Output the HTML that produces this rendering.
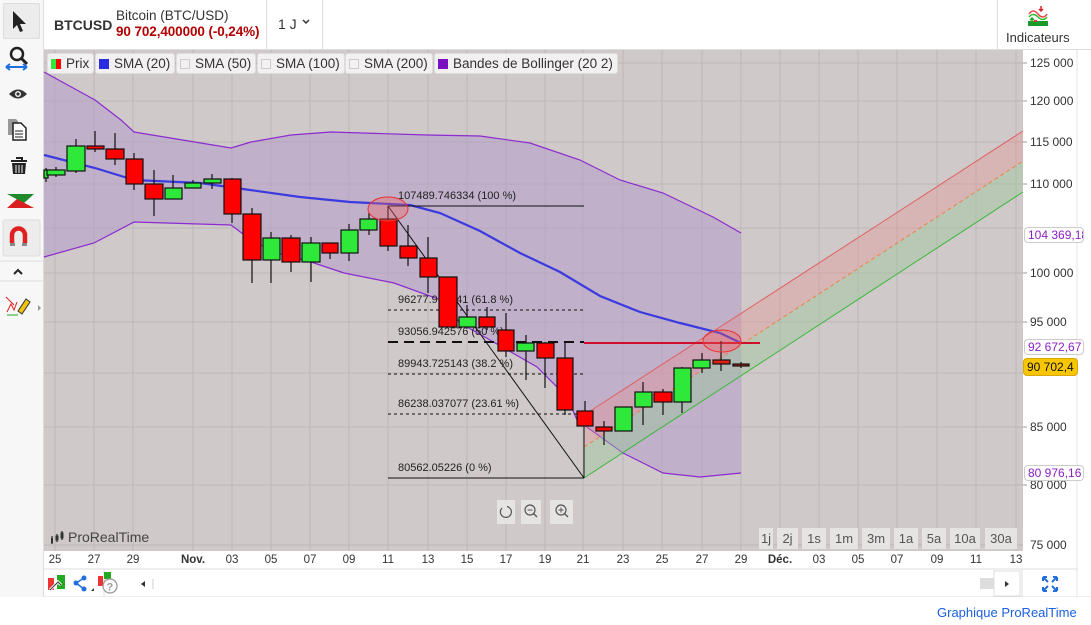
<!DOCTYPE html>
<html><head><meta charset="utf-8">
<style>
*{margin:0;padding:0;box-sizing:border-box}
body{width:1091px;height:625px;background:#fff;font-family:"Liberation Sans",sans-serif;position:relative;overflow:hidden;color:#333}
.abs{position:absolute}
.lt{left:0;top:0;width:44px;height:597px;background:#f7f7f7;border-right:1px solid #ddd}
.ib{position:absolute;left:3px;width:37px;height:36px}
.leg{position:absolute;top:53px;height:21px;background:#f2f0f0;border:1px solid #ddd;border-radius:3px;font-size:13.5px;line-height:19px;padding:0 4px 0 3px;color:#333;white-space:nowrap}
.sq{display:inline-block;width:10px;height:10px;vertical-align:-1px;margin-right:5px;border:1px solid #ccc}
.pa{position:absolute;left:1030px;font-size:12px;color:#333}
.dt{position:absolute;top:554px;font-size:11.5px;color:#333;transform:translateX(-50%)}
.pb{position:absolute;top:528px;height:21px;background:#e6e3e3;font-size:13px;color:#555;line-height:21px;text-align:center}
.tag{position:absolute;left:1024px;height:16px;font-size:12px;line-height:14px;padding:0 3px;border:1px solid #ccc;border-radius:4px;background:#fff;color:#8b1fc4;width:60px;overflow:hidden;white-space:nowrap}
</style></head><body>
<div class="abs lt">
 <div class="ib" style="top:3px;background:#ececec;border:1px solid #ddd;border-radius:2px"></div>
 <svg class="abs" style="left:0;top:0" width="44" height="320">
  <path d="M13 11 L13 29 L17 25 L20 32 L23 31 L20 24 L26 24 Z" fill="#222"/>
  <circle cx="17" cy="54" r="6" fill="none" stroke="#222" stroke-width="2.5"/>
  <line x1="21" y1="58" x2="27" y2="64" stroke="#222" stroke-width="3"/>
  <path d="M6 67 H27 M6 67 l4 -3 M6 67 l4 3 M27 67 l-4 -3 M27 67 l-4 3" stroke="#1f6fe0" stroke-width="2" fill="none"/>
  <path d="M9 94 Q18 85 27 94 Q18 103 9 94Z" fill="#333"/><circle cx="18" cy="94" r="3" fill="#f7f7f7"/><circle cx="18" cy="94" r="1.6" fill="#333"/>
  <path d="M8 119 h8 l2 2 v14 h-10z" fill="#999"/><path d="M13 123 h8 l5 5 v12 h-13z" fill="#fff" stroke="#222" stroke-width="1.5"/><path d="M15 131h8M15 134h8M15 137h8" stroke="#222"/>
  <path d="M11 161 h16 M16 158 h6 v3" stroke="#222" stroke-width="2" fill="none"/><path d="M12 163 h14 l-1 11 h-12z" fill="#222"/><path d="M16 165v8M19 165v8M22 165v8" stroke="#f7f7f7"/>
  <path d="M7 194 L34 194 L24 203 Z" fill="#1e8a2b"/><path d="M7 208 L34 208 L17 199 Z" fill="#d92020"/>
  <rect x="3" y="220" width="37" height="36" rx="2" fill="#ececec" stroke="#ddd"/>
  <path d="M12 243 V235 A6.5 6.5 0 0 1 25 235 V243" fill="none" stroke="#e02020" stroke-width="4.5"/>
  <rect x="10" y="243" width="5" height="3" fill="#888"/><rect x="22" y="243" width="5" height="3" fill="#888"/>
  <line x1="0" y1="261" x2="44" y2="261" stroke="#ddd"/><line x1="0" y1="281" x2="44" y2="281" stroke="#ddd"/>
  <path d="M14 274 l4 -4 l4 4" stroke="#222" stroke-width="2" fill="none"/>
  <path d="M6 297 l8 8 M7 312 l4 -8 l3 6 l3 -8" stroke="#d22" fill="none"/><path d="M18 311 l8 -12 l4 3 l-8 12 z" fill="#f1c40f" stroke="#333"/><line x1="7" y1="315" x2="18" y2="315" stroke="#2a2"/>
  <path d="M38 305 l3 3 l-3 3z" fill="#999"/>
 </svg>
</div>
<div class="abs" style="left:44px;top:0;width:1047px;height:50px;background:#fff;border-bottom:1px solid #ddd"></div>
<div class="abs" style="left:54px;top:17px;font-size:14px;font-weight:bold;color:#333">BTCUSD</div>
<div class="abs" style="left:116px;top:8px;font-size:13.5px;color:#333">Bitcoin (BTC/USD)</div>
<div class="abs" style="left:116px;top:24px;font-size:13.5px;color:#b30000;font-weight:bold;letter-spacing:-0.1px">90 702,400000 (-0,24%)</div>
<div class="abs" style="top:0;width:1px;height:50px;background:#ddd;left:266px"></div>
<div class="abs" style="left:278px;top:16px;font-size:14px;color:#333">1 J</div>
<svg class="abs" style="left:302px;top:19px" width="8" height="6"><path d="M1 1 l3 3 l3 -3" stroke="#333" stroke-width="1.5" fill="none"/></svg>
<div class="abs" style="left:322px;top:0;width:1px;height:50px;background:#ddd"></div>
<div class="abs" style="left:997px;top:0;width:1px;height:50px;background:#ddd"></div>
<svg class="abs" style="left:1027px;top:5px" width="22" height="22">
 <path d="M2 9 q4 -6 9 0 t9 0" stroke="#e44" fill="none" stroke-width="1.5"/><path d="M2 12 q4 -5 9 0 t9 0" stroke="#3b3" fill="none" stroke-width="1.5"/>
 <path d="M14 1 v5 M12 4 l2 2 l2 -2" stroke="#d22" fill="none" stroke-width="1.5"/>
 <path d="M5 18 v-5 M3 15 l2 -2 l2 2" stroke="#2a2" fill="none" stroke-width="1.5"/>
 <rect x="1" y="16" width="20" height="5" fill="#1a9a2a"/><rect x="7" y="15" width="3" height="2" fill="#e33"/>
</svg>
<div class="abs" style="left:1006px;top:30px;font-size:13px;color:#333">Indicateurs</div>

<svg class="abs" style="left:0;top:0" width="1091" height="597">
 <rect x="44" y="50" width="979" height="501" fill="#cfc9c9"/>
 <g stroke="#bdb6b6" stroke-width="1">
  <line x1="44" y1="63" x2="1023" y2="63"/><line x1="44" y1="101" x2="1023" y2="101"/><line x1="44" y1="142" x2="1023" y2="142"/><line x1="44" y1="184" x2="1023" y2="184"/><line x1="44" y1="228" x2="1023" y2="228"/><line x1="44" y1="273" x2="1023" y2="273"/><line x1="44" y1="322" x2="1023" y2="322"/><line x1="44" y1="373" x2="1023" y2="373"/><line x1="44" y1="427" x2="1023" y2="427"/><line x1="44" y1="485" x2="1023" y2="485"/><line x1="44" y1="545" x2="1023" y2="545"/>
  <line x1="55" y1="50" x2="55" y2="551"/><line x1="94" y1="50" x2="94" y2="551"/><line x1="133" y1="50" x2="133" y2="551"/><line x1="193" y1="50" x2="193" y2="551"/><line x1="232" y1="50" x2="232" y2="551"/><line x1="271" y1="50" x2="271" y2="551"/><line x1="310" y1="50" x2="310" y2="551"/><line x1="349" y1="50" x2="349" y2="551"/><line x1="388" y1="50" x2="388" y2="551"/><line x1="428" y1="50" x2="428" y2="551"/><line x1="467" y1="50" x2="467" y2="551"/><line x1="506" y1="50" x2="506" y2="551"/><line x1="545" y1="50" x2="545" y2="551"/><line x1="583" y1="50" x2="583" y2="551"/><line x1="623" y1="50" x2="623" y2="551"/><line x1="662" y1="50" x2="662" y2="551"/><line x1="702" y1="50" x2="702" y2="551"/><line x1="741" y1="50" x2="741" y2="551"/><line x1="780" y1="50" x2="780" y2="551"/><line x1="819" y1="50" x2="819" y2="551"/><line x1="858" y1="50" x2="858" y2="551"/><line x1="897" y1="50" x2="897" y2="551"/><line x1="937" y1="50" x2="937" y2="551"/><line x1="976" y1="50" x2="976" y2="551"/><line x1="1016" y1="50" x2="1016" y2="551"/>
 </g>
 <path d="M44 72 L95 100 L121 120 L134 132 L231 148 L251 142 L291 135 L331 132 L427 135 L480 136 L530 143 L580 160 L620 180 L663 193 L713 217 L741 233 L741 473 L700 477 L663 473 L623 453 L577 420 L567 397 L537 367 L490 340 L460 323 L441 300 L394 283 L344 273 L311 262 L277 253 L251 240 L231 225 L134 222 L94 243 L44 257 Z" fill="#b59bc9" fill-opacity="0.55"/>
 <path d="M44 72 L95 100 L121 120 L134 132 L231 148 L251 142 L291 135 L331 132 L427 135 L480 136 L530 143 L580 160 L620 180 L663 193 L713 217 L741 233" fill="none" stroke="#8b2bd0" stroke-width="1.2"/>
 <path d="M44 257 L94 243 L134 222 L231 225 L251 240 L277 253 L311 262 L344 273 L394 283 L441 300 L460 323 L490 340 L537 367 L567 397 L577 420 L623 453 L663 473 L700 477 L741 473" fill="none" stroke="#8b2bd0" stroke-width="1.2"/>
 <path d="M584 415 L1023 131 L1023 161 L584 447Z" fill="#e89090" fill-opacity="0.35"/>
 <path d="M584 447 L1023 161 L1023 192 L584 478Z" fill="#9cc89c" fill-opacity="0.45"/>
 <line x1="584" y1="415" x2="1023" y2="131" stroke="#e06060" stroke-width="1"/>
 <line x1="584" y1="447" x2="1023" y2="161" stroke="#f08040" stroke-width="1" stroke-dasharray="4,3"/>
 <line x1="584" y1="478" x2="1023" y2="192" stroke="#3cb83c" stroke-width="1"/>
 <path d="M44 155 L95 168 L134 180 L200 183 L250 190 L300 197 L350 202 L410 205 L440 213 L480 231 L520 253 L560 272 L600 296 L640 312 L680 323 L720 333 L741 343" fill="none" stroke="#3a3ae0" stroke-width="2.2"/>
 <g stroke="#111" stroke-width="1">
  <line x1="388" y1="206" x2="584" y2="206"/>
  <line x1="388" y1="310" x2="584" y2="310" stroke-dasharray="3,3"/>
  <line x1="388" y1="342" x2="584" y2="342" stroke-width="2" stroke-dasharray="10,6"/>
  <line x1="388" y1="374" x2="584" y2="374" stroke-dasharray="3,3"/>
  <line x1="388" y1="414" x2="584" y2="414" stroke-dasharray="3,3"/>
  <line x1="388" y1="478" x2="584" y2="478"/>
  <line x1="388" y1="206" x2="584" y2="478"/>
  <line x1="584" y1="414" x2="584" y2="478"/>
 </g>
 <g font-size="11" fill="#222" font-family="Liberation Sans">
  <text x="398" y="199">107489.746334 (100 %)</text>
  <text x="398" y="303">96277.917841 (61.8 %)</text>
  <text x="398" y="335">93056.942576 (50 %)</text>
  <text x="398" y="367">89943.725143 (38.2 %)</text>
  <text x="398" y="407">86238.037077 (23.61 %)</text>
  <text x="398" y="471">80562.05226 (0 %)</text>
 </g>
 <line x1="584" y1="343" x2="760" y2="343" stroke="#d0102a" stroke-width="2"/>
 <g stroke="#111" stroke-width="1.2">
  <line x1="46" y1="168" x2="46" y2="182"/><rect x="44" y="170" width="4" height="8" fill="#2ee83a"/>
  <line x1="56" y1="167" x2="56" y2="177"/><rect x="47" y="170" width="18" height="5" fill="#2ee83a"/>
  <line x1="76" y1="139" x2="76" y2="173"/><rect x="67" y="146" width="18" height="25" fill="#2ee83a"/>
  <line x1="95" y1="131" x2="95" y2="152"/><rect x="87" y="146" width="17" height="3" fill="#f00"/>
  <line x1="115" y1="133" x2="115" y2="165"/><rect x="106" y="149" width="18" height="10" fill="#f00"/>
  <line x1="134" y1="153" x2="134" y2="190"/><rect x="126" y="159" width="17" height="25" fill="#f00"/>
  <line x1="154" y1="170" x2="154" y2="216"/><rect x="145" y="184" width="18" height="15" fill="#f00"/>
  <line x1="173" y1="175" x2="173" y2="199"/><rect x="165" y="188" width="17" height="11" fill="#2ee83a"/>
  <line x1="193" y1="180" x2="193" y2="188"/><rect x="185" y="183" width="16" height="5" fill="#2ee83a"/>
  <line x1="212" y1="174" x2="212" y2="189"/><rect x="204" y="179" width="17" height="4" fill="#2ee83a"/>
  <line x1="232" y1="178" x2="232" y2="223"/><rect x="224" y="179" width="17" height="35" fill="#f00"/>
  <line x1="252" y1="208" x2="252" y2="283"/><rect x="243" y="214" width="18" height="46" fill="#f00"/>
  <line x1="271" y1="232" x2="271" y2="283"/><rect x="263" y="238" width="17" height="22" fill="#2ee83a"/>
  <line x1="291" y1="235" x2="291" y2="272"/><rect x="282" y="238" width="18" height="24" fill="#f00"/>
  <line x1="311" y1="237" x2="311" y2="282"/><rect x="302" y="243" width="18" height="19" fill="#2ee83a"/>
  <line x1="330" y1="243" x2="330" y2="259"/><rect x="322" y="243" width="16" height="10" fill="#f00"/>
  <line x1="349" y1="224" x2="349" y2="261"/><rect x="341" y="230" width="17" height="23" fill="#2ee83a"/>
  <line x1="369" y1="213" x2="369" y2="235"/><rect x="360" y="219" width="17" height="11" fill="#2ee83a"/>
  <line x1="388" y1="206" x2="388" y2="251"/><rect x="380" y="219" width="17" height="27" fill="#f00"/>
  <line x1="408" y1="225" x2="408" y2="266"/><rect x="400" y="246" width="17" height="12" fill="#f00"/>
  <line x1="428" y1="237" x2="428" y2="293"/><rect x="420" y="258" width="17" height="19" fill="#f00"/>
  <line x1="448" y1="277" x2="448" y2="327"/><rect x="439" y="277" width="18" height="50" fill="#f00"/>
  <line x1="467" y1="305" x2="467" y2="327"/><rect x="459" y="317" width="17" height="10" fill="#2ee83a"/>
  <line x1="487" y1="307" x2="487" y2="330"/><rect x="479" y="317" width="16" height="10" fill="#f00"/>
  <line x1="506" y1="313" x2="506" y2="357"/><rect x="498" y="330" width="16" height="21" fill="#f00"/>
  <line x1="526" y1="335" x2="526" y2="380"/><rect x="517" y="343" width="17" height="8" fill="#2ee83a"/>
  <line x1="545" y1="342" x2="545" y2="388"/><rect x="537" y="343" width="17" height="15" fill="#f00"/>
  <line x1="565" y1="342" x2="565" y2="415"/><rect x="557" y="358" width="16" height="52" fill="#f00"/>
  <line x1="585" y1="401" x2="585" y2="426"/><rect x="577" y="411" width="16" height="15" fill="#f00"/>
  <line x1="604" y1="421" x2="604" y2="445"/><rect x="596" y="427" width="16" height="4" fill="#f00"/>
  <line x1="624" y1="407" x2="624" y2="431"/><rect x="615" y="407" width="17" height="24" fill="#2ee83a"/>
  <line x1="643" y1="382" x2="643" y2="425"/><rect x="635" y="392" width="17" height="15" fill="#2ee83a"/>
  <line x1="663" y1="389" x2="663" y2="415"/><rect x="654" y="392" width="18" height="10" fill="#f00"/>
  <line x1="682" y1="367" x2="682" y2="413"/><rect x="674" y="368" width="17" height="34" fill="#2ee83a"/>
  <line x1="702" y1="353" x2="702" y2="373"/><rect x="693" y="360" width="17" height="8" fill="#2ee83a"/>
  <line x1="721" y1="341" x2="721" y2="371"/><rect x="713" y="360" width="17" height="4" fill="#e02010"/>
  <line x1="741" y1="362" x2="741" y2="368"/><rect x="733" y="364" width="16" height="2" fill="#c02010"/>
 </g>
 <ellipse cx="388" cy="209" rx="20" ry="12" fill="#f06060" fill-opacity="0.35" stroke="#e83030"/>
 <ellipse cx="722" cy="341" rx="19" ry="11" fill="#f06060" fill-opacity="0.35" stroke="#e83030"/>
 <rect x="1023" y="50" width="68" height="501" fill="#fff"/>
 <line x1="1077" y1="50" x2="1077" y2="597" stroke="#e4e4e4"/>
 <rect x="1078" y="50" width="13" height="547" fill="#fff"/>
 <g stroke="#999"><line x1="1023" y1="63" x2="1027" y2="63"/><line x1="1023" y1="101" x2="1027" y2="101"/><line x1="1023" y1="142" x2="1027" y2="142"/><line x1="1023" y1="184" x2="1027" y2="184"/><line x1="1023" y1="273" x2="1027" y2="273"/><line x1="1023" y1="322" x2="1027" y2="322"/><line x1="1023" y1="427" x2="1027" y2="427"/><line x1="1023" y1="485" x2="1027" y2="485"/></g>
 <rect x="44" y="551" width="979" height="18" fill="#fff"/>
 <line x1="44" y1="569" x2="1077" y2="569" stroke="#ddd"/>
 <line x1="44" y1="597" x2="1091" y2="597" stroke="#ddd"/>
 <line x1="104" y1="569" x2="104" y2="597" stroke="#ddd"/>
 <line x1="1022" y1="569" x2="1022" y2="597" stroke="#ddd"/>
</svg>
<div class="leg" style="left:47px"><span class="sq" style="background:linear-gradient(90deg,#2ee83a 50%,#f00 50%);border:none"></span>Prix</div>
<div class="leg" style="left:95px"><span class="sq" style="background:#2b2be0;border:none"></span>SMA (20)</div>
<div class="leg" style="left:176px"><span class="sq"></span>SMA (50)</div>
<div class="leg" style="left:257px"><span class="sq"></span>SMA (100)</div>
<div class="leg" style="left:345px"><span class="sq"></span>SMA (200)</div>
<div class="leg" style="left:434px"><span class="sq" style="background:#7a10c0;border:none"></span>Bandes de Bollinger (20 2)</div>
<div class="pa" style="top:56px">125 000</div>
<div class="pa" style="top:94px">120 000</div>
<div class="pa" style="top:135px">115 000</div>
<div class="pa" style="top:177px">110 000</div>
<div class="pa" style="top:266px">100 000</div>
<div class="pa" style="top:315px">95 000</div>
<div class="pa" style="top:420px">85 000</div>
<div class="pa" style="top:478px">80 000</div>
<div class="pa" style="top:538px">75 000</div>
<div class="tag" style="top:227px">104 369,18</div>
<div class="tag" style="top:339px">92 672,67</div>
<div class="abs" style="left:1023px;top:358px;height:18px;padding:0 3px;background:#f7c600;border:1px solid #d8a800;border-radius:4px;font-size:12px;line-height:16px;color:#111">90 702,4</div>
<div class="tag" style="top:465px">80 976,16</div>
<div class="dt" style="left:55px">25</div><div class="dt" style="left:94px">27</div><div class="dt" style="left:133px">29</div><div class="dt" style="left:193px;font-weight:bold">Nov.</div><div class="dt" style="left:232px">03</div><div class="dt" style="left:271px">05</div><div class="dt" style="left:310px">07</div><div class="dt" style="left:349px">09</div><div class="dt" style="left:388px">11</div><div class="dt" style="left:428px">13</div><div class="dt" style="left:467px">15</div><div class="dt" style="left:506px">17</div><div class="dt" style="left:545px">19</div><div class="dt" style="left:583px">21</div><div class="dt" style="left:623px">23</div><div class="dt" style="left:662px">25</div><div class="dt" style="left:702px">27</div><div class="dt" style="left:741px">29</div><div class="dt" style="left:780px;font-weight:bold">Déc.</div><div class="dt" style="left:819px">03</div><div class="dt" style="left:858px">05</div><div class="dt" style="left:897px">07</div><div class="dt" style="left:937px">09</div><div class="dt" style="left:976px">11</div><div class="dt" style="left:1016px">13</div>
<div class="pb" style="left:759px;width:14px">1j</div><div class="pb" style="left:777px;width:21px">2j</div><div class="pb" style="left:802px;width:24px">1s</div><div class="pb" style="left:830px;width:28px">1m</div><div class="pb" style="left:862px;width:28px">3m</div><div class="pb" style="left:894px;width:24px">1a</div><div class="pb" style="left:922px;width:24px">5a</div><div class="pb" style="left:950px;width:30px">10a</div><div class="pb" style="left:985px;width:32px">30a</div>
<svg class="abs" style="left:497px;top:500px" width="80" height="25">
 <rect x="0" y="0" width="18" height="24" fill="#e6e3e3"/><rect x="24" y="0" width="20" height="24" fill="#e6e3e3"/><rect x="53" y="0" width="23" height="24" fill="#e6e3e3"/>
 <path d="M5 8 A5.5 5.5 0 1 0 10 6.5" fill="none" stroke="#555" stroke-width="1.2"/>
 <circle cx="33" cy="10" r="5" fill="none" stroke="#555" stroke-width="1.2"/><line x1="30.5" y1="10" x2="35.5" y2="10" stroke="#555"/><line x1="36.5" y1="13.5" x2="40" y2="17" stroke="#555" stroke-width="1.3"/>
 <circle cx="64" cy="10" r="5" fill="none" stroke="#555" stroke-width="1.2"/><path d="M61.5 10h5M64 7.5v5" stroke="#555"/><line x1="67.5" y1="13.5" x2="71" y2="17" stroke="#555" stroke-width="1.3"/>
</svg>
<svg class="abs" style="left:50px;top:530px" width="18" height="16"><path d="M2 6v8M7 4v8M12 1v9" stroke="#333" stroke-width="1.3"/><rect x="1" y="8" width="2" height="5" fill="#333"/><rect x="6" y="6" width="2" height="4" fill="none" stroke="#333"/><rect x="11" y="3" width="2" height="5" fill="none" stroke="#333"/></svg>
<div class="abs" style="left:68px;top:529px;font-size:14px;color:#444">ProRealTime</div>
<svg class="abs" style="left:44px;top:570px" width="1047" height="27">
 <rect x="4" y="8" width="6" height="12" fill="#e33"/><rect x="13" y="5" width="8" height="14" fill="#2a2"/><path d="M6 20 l8 -8 l3 3" stroke="#fff" stroke-width="3" fill="none"/><path d="M6 20 l8 -8 l3 3" stroke="#333" stroke-width="1" fill="none"/>
 <circle cx="40" cy="8" r="2.5" fill="#1f6fe0"/><circle cx="32" cy="13" r="2.5" fill="#1f6fe0"/><circle cx="40" cy="19" r="2.5" fill="#1f6fe0"/><path d="M40 8 L32 13 L40 19" stroke="#1f6fe0" stroke-width="1.5" fill="none"/><path d="M47 21 l3 -3 v3z" fill="#333"/>
 <rect x="54" y="6" width="5" height="10" fill="#e33"/><rect x="60" y="2" width="7" height="7" fill="#2a2"/><circle cx="66" cy="16" r="7" fill="#fff" stroke="#999" stroke-width="1.3"/><text x="62.5" y="20.5" font-size="11" fill="#999" font-weight="bold" font-family="Liberation Sans">?</text>
 <path d="M97 14 l4 -3 v6z" fill="#333"/><line x1="109" y1="9" x2="109" y2="19" stroke="#ccc"/>
 <rect x="936" y="8" width="14" height="11" fill="#ddd"/><rect x="950" y="1" width="26" height="25" fill="#fff" stroke="#ddd"/><path d="M961 11 l4 3 l-4 3z" fill="#333"/>
 <g stroke="#1f6fe0" stroke-width="2" fill="none"><path d="M999 7 l5 5 M999 7 v4 M999 7 h4"/><path d="M1013 7 l-5 5 M1013 7 v4 M1013 7 h-4"/><path d="M999 21 l5 -5 M999 21 v-4 M999 21 h4"/><path d="M1013 21 l-5 -5 M1013 21 v-4 M1013 21 h-4"/></g>
</svg>
<div class="abs" style="left:937px;top:605px;font-size:13px;color:#1a5fe0">Graphique ProRealTime</div>
</body></html>
